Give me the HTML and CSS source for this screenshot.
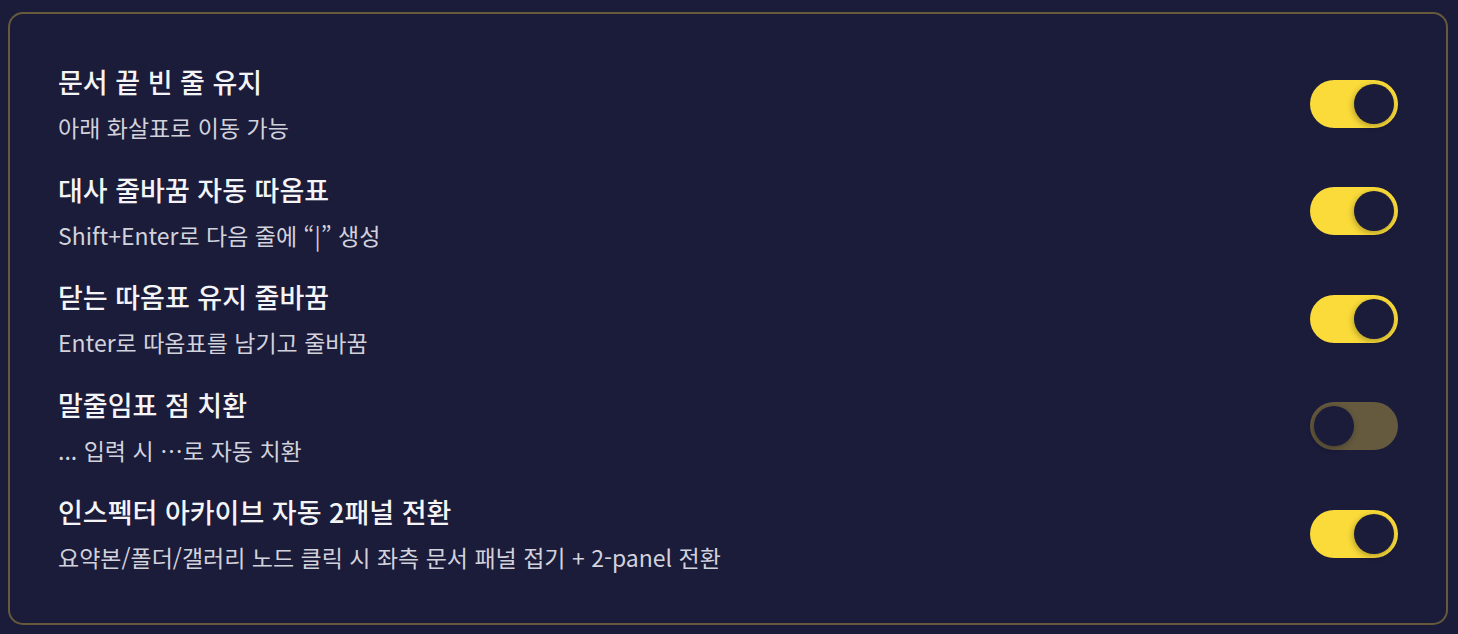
FILE: index.html
```html
<!DOCTYPE html>
<html lang="ko">
<head>
    <meta charset="UTF-8">
    <meta name="viewport" content="width=device-width, initial-scale=1.0">
    <title>설정</title>
    <link rel="stylesheet" href="styles.css">
</head>
<body>
    <div class="card">
        <div class="row">
            <div class="text">
                <div class="title">문서 끝 빈 줄 유지</div>
                <div class="desc">아래 화살표로 이동 가능</div>
            </div>
            <div class="toggle on"><div class="knob"></div></div>
        </div>
        <div class="row">
            <div class="text">
                <div class="title">대사 줄바꿈 자동 따옴표</div>
                <div class="desc">Shift+Enter로 다음 줄에 “|” 생성</div>
            </div>
            <div class="toggle on"><div class="knob"></div></div>
        </div>
        <div class="row">
            <div class="text">
                <div class="title">닫는 따옴표 유지 줄바꿈</div>
                <div class="desc">Enter로 따옴표를 남기고 줄바꿈</div>
            </div>
            <div class="toggle on"><div class="knob"></div></div>
        </div>
        <div class="row">
            <div class="text">
                <div class="title">말줄임표 점 치환</div>
                <div class="desc">... 입력 시 …로 자동 치환</div>
            </div>
            <div class="toggle"><div class="knob"></div></div>
        </div>
        <div class="row">
            <div class="text">
                <div class="title">인스펙터 아카이브 자동 2패널 전환</div>
                <div class="desc">요약본/폴더/갤러리 노드 클릭 시 좌측 문서 패널 접기 + 2-panel 전환</div>
            </div>
            <div class="toggle on"><div class="knob"></div></div>
        </div>
    </div>
</body>
</html>
```

FILE: styles.css
```css
body {
    margin: 0;
    background: #1b1b3a;
    font-family: "Noto Sans CJK KR", "Noto Sans", sans-serif;
}

.card {
    margin: 12px 10px 0 8px;
    height: 613px;
    box-sizing: border-box;
    border: 2px solid #675a3c;
    border-radius: 15px;
    padding: 52px 48px 0 48px;
    display: flex;
    flex-direction: column;
    gap: 32.5px;
}

.row {
    display: flex;
    align-items: center;
    justify-content: space-between;
}

.text {
    display: flex;
    flex-direction: column;
    gap: 15px;
}

.title {
    color: #f4f4f6;
    font-size: 27px;
    line-height: 32px;
    font-weight: 500;
}

.desc {
    color: #d2d2dc;
    font-size: 23px;
    line-height: 28px;
}

.toggle {
    width: 88px;
    height: 48px;
    border-radius: 24px;
    background: #655a3e;
    display: flex;
    align-items: center;
    padding: 0 4px;
    box-sizing: border-box;
}

.toggle.on {
    background: #fadb3a;
    justify-content: flex-end;
}

.knob {
    width: 40px;
    height: 40px;
    border-radius: 50%;
    background: #1b1b3a;
    box-shadow: -1px 2px 6px rgba(0, 0, 0, 0.3);
}
```
